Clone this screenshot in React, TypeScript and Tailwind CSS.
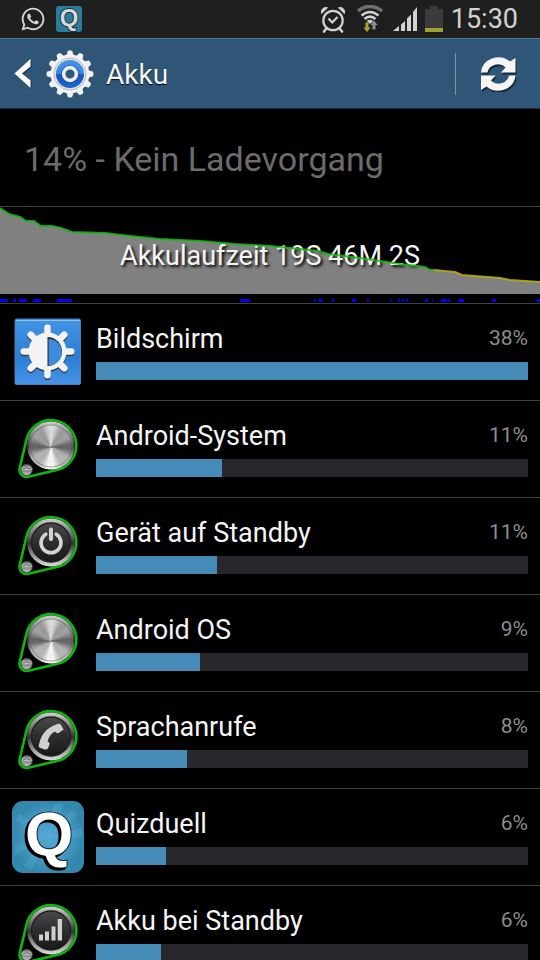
import { FaWhatsapp } from "react-icons/fa";

type IconName = "display" | "metal" | "power" | "phone" | "quiz" | "signal";

type Item = {
  name: string;
  percent: number;
  bar: number;
  icon: IconName;
}

const items: Item[] = [
  { name: "Bildschirm", percent: 38, bar: 100, icon: "display" },
  { name: "Android-System", percent: 11, bar: 29.2, icon: "metal" },
  { name: "Gerät auf Standby", percent: 11, bar: 28, icon: "power" },
  { name: "Android OS", percent: 9, bar: 24, icon: "metal" },
  { name: "Sprachanrufe", percent: 8, bar: 21, icon: "phone" },
  { name: "Quizduell", percent: 6, bar: 16.2, icon: "quiz" },
  { name: "Akku bei Standby", percent: 6, bar: 15, icon: "signal" },
];

// battery level, split where it drops into the yellow range
const greenLine = "0,1 9,7 20,10 26,14 34,14 41,19 52,19 61,21 72,25 105,26 130,29 160,32 200,34 235,37 270,39 290,41 318,44 328,47 360,51 400,57 425,60 430,63 434,63";
const yellowLine = "434,63 455,65 462,68 500,71 510,73 540,75";

// [start, width] of the times the device was awake
const awake = [
  [0, 8], [13, 3], [19, 8], [33, 8], [57, 15], [240, 10], [314, 2], [319, 4], [332, 2],
  [352, 4], [367, 2], [390, 1], [398, 2], [402, 2], [406, 2], [425, 3], [432, 1],
  [441, 6], [448, 2], [458, 6], [492, 4], [537, 3],
];

function Gear() {
  return (
    <svg className="size-12" viewBox="0 0 48 48" aria-hidden="true">
      <defs>
        <linearGradient id="gearBlue" x1="0" y1="0" x2="0" y2="1">
          <stop offset="0" stopColor="#4795ee" />
          <stop offset="0.5" stopColor="#3585e6" />
          <stop offset="0.52" stopColor="#1356bd" />
          <stop offset="1" stopColor="#1c68d2" />
        </linearGradient>
      </defs>
      <g fill="#f2f2f2">
        {[0, 30, 60, 90, 120, 150, 180, 210, 240, 270, 300, 330].map((a) => (
          <path key={a} d="M20 7 L21.6 1.4 Q22 .6 23 .6 H25 Q26 .6 26.4 1.4 L28 7Z" transform={`rotate(${a} 24 24)`} />
        ))}
        <circle cx="24" cy="24" r="19.4" />
      </g>
      <circle cx="24" cy="24" r="16" fill="#e4e4e4" stroke="#b9b9b9" strokeWidth="1" />
      <circle cx="24" cy="24" r="14" fill="url(#gearBlue)" />
      <circle cx="24" cy="24" r="6.4" fill="#3b4f70" stroke="#1a4b99" strokeWidth="5" />
      <circle cx="24" cy="24" r="6.4" fill="#2f5676" stroke="#ececec" strokeWidth="3.6" />
    </svg>
  )
}

function StatusBar() {
  return (
    <div className="flex h-[38px] shrink-0 items-center justify-between bg-[#1f1f1f] pl-5 pr-[22px] text-[#d2d2d2]">
      <div className="flex items-center gap-2.5">
        <FaWhatsapp className="size-[26px]" aria-label="WhatsApp" />
        <svg className="size-[26px] overflow-visible" viewBox="0 0 26 26" aria-hidden="true">
          <rect width="26" height="26" rx="3" fill="#2b7b9c" />
          <text x="13" y="20" textAnchor="middle" fontSize="24" strokeWidth="2" paintOrder="stroke" className="fill-[#d8d8d8] stroke-[#16323f] font-['Liberation_Sans',sans-serif] font-bold">Q</text>
        </svg>
      </div>

      <div className="flex items-center">
        {/* Wecker */}
        <svg className="mr-3 h-7 w-6" viewBox="0 0 24 28" fill="none" stroke="currentColor" aria-hidden="true">
          <circle cx="12" cy="15.5" r="9.7" strokeWidth="2.2" />
          <path d="M7.5 13.5 L11.2 17.5 L16.5 12" strokeWidth="2.2" />
          <path d="M5 24 L3 26.5 M19 24 L21 26.5" strokeWidth="2.6" strokeLinecap="round" />
          <path d="M.6 8.5 A4.5 4.5 0 0 1 6.5 2.8Z M23.4 8.5 A4.5 4.5 0 0 0 17.5 2.8Z" fill="currentColor" strokeWidth="1" />
        </svg>
        {/* WLAN */}
        <svg className="mr-2.5 h-7 w-[26px]" viewBox="0 0 26 28" fill="none" aria-hidden="true">
          <path d="M1 6 Q13 -3 25 6" stroke="#707070" strokeWidth="3.6" />
          <path d="M4.5 10.5 Q13 3.5 21.5 10.5" stroke="#d2d2d2" strokeWidth="2.6" />
          <path d="M7.5 14 Q13 9.2 18.5 14" stroke="#d2d2d2" strokeWidth="2.6" />
          <path d="M9.8 16 Q13 13.5 16.2 16 L13 19Z" fill="#d2d2d2" />
          <path d="M8.5 17.5 H11.5 V22.5 H13.6 L10 27 L6.4 22.5 H8.5Z" fill="#a9a72d" />
          <path d="M15.5 24.5 H18.5 V20 H20.6 L17 15.5 L13.4 20 H15.5Z" fill="#8b8f96" />
        </svg>
        <svg className="mr-2 h-6 w-6" viewBox="0 0 24 24" fill="currentColor" aria-hidden="true">
          <path d="M0 24 L6 19 V24Z M8 17.5 L12 14 V24 H8Z M14 11.5 L18 7.5 V24 H14Z M20 5 L24 0 V24 H20Z" />
        </svg>
        <svg className="mr-2 h-[26px] w-[18px]" viewBox="0 0 18 26" aria-hidden="true">
          <path d="M5 0 H13 V3 H18 V26 H0 V3 H5Z" fill="#3b3b3b" />
          <rect y="22" width="18" height="4" fill="#a3a22f" />
        </svg>
        <span className="text-[27px] leading-8">15:30</span>
      </div>
    </div>
  )
}

// brushed steel, drawn as thin slices around the centre
function Steel({ cx, cy, r }: { cx: number; cy: number; r: number }) {
  const slices = Array.from({ length: 90 }, (_, i) => i * 4);
  return (
    <g>
      {slices.map((deg) => {
        const a = (deg * Math.PI) / 180;
        const b = ((deg + 4) * Math.PI) / 180;
        const light = Math.min(250, Math.round(172 - 48 * Math.cos(2 * a) - 22 * Math.cos(6 * a) + 16 * Math.sin(a)));
        const color = `rgb(${light},${light},${light})`;
        return (
          <path
            key={deg}
            d={`M${cx} ${cy} L${cx + r * Math.cos(a)} ${cy + r * Math.sin(a)} L${cx + r * Math.cos(b)} ${cy + r * Math.sin(b)}Z`}
            fill={color}
            stroke={color}
            strokeWidth="0.4"
          />
        )
      })}
    </g>
  )
}

function Knob({ icon }: { icon: IconName }) {
  return (
    <svg className="size-[72px]" viewBox="0 0 72 72" aria-hidden="true">
      <defs>
        <linearGradient id="ring" x1="0" y1="0" x2="0" y2="1">
          <stop offset="0" stopColor="#d0d0d0" />
          <stop offset="0.3" stopColor="#777" />
          <stop offset="0.52" stopColor="#333" />
          <stop offset="0.75" stopColor="#929292" />
          <stop offset="1" stopColor="#dcdcdc" />
        </linearGradient>
        <linearGradient id="dark" x1="0" y1="0" x2="0" y2="1">
          <stop offset="0" stopColor="#4a4a4a" />
          <stop offset="0.5" stopColor="#2d2d2d" />
          <stop offset="1" stopColor="#181818" />
        </linearGradient>
        <linearGradient id="ball" x1="0" y1="0" x2="0" y2="1">
          <stop offset="0" stopColor="#4d4d4d" />
          <stop offset="0.4" stopColor="#d8d8d8" />
          <stop offset="0.6" stopColor="#858585" />
          <stop offset="1" stopColor="#d0d0d0" />
        </linearGradient>
      </defs>
      <path d="M14.4 26.7 A25.3 25.3 0 1 1 44.8 57.1 L16.4 63.8 A7.2 7.2 0 0 1 7.7 55.1Z" fill="#000" stroke="#0cb80c" strokeWidth="2.6" />
      <circle cx="39" cy="32.5" r="24" fill="url(#ring)" />
      {icon === "metal" ? (
        <>
          <Steel cx={39} cy={34} r={22} />
          <circle cx="39" cy="33" r="21" fill="none" stroke="#4c4c4c" strokeOpacity=".5" />
        </>
      ) : (
        <circle cx="39" cy="32.5" r="19.5" fill="url(#dark)" stroke="#202020" strokeWidth="1.4" />
      )}
      <circle cx="14.7" cy="56.8" r="5.6" fill="url(#ball)" stroke="#555" strokeWidth=".8" />
      <path d="M10.5 56 Q14.5 53.5 19 56" fill="none" stroke="#444" strokeWidth=".8" />
      {icon === "power" && (
        <g fill="none" stroke="#d4d4d4" strokeWidth="3.6" strokeLinecap="round">
          <path d="M33.8 24.2 A10 10 0 1 0 44.2 24.2" />
          <path d="M39 19.5 V29" strokeWidth="4" />
        </g>
      )}
      {icon === "phone" && (
        <path d="M44 20.5 L46.5 19.8 Q48 19.6 49 21 L51.6 25.4 L46.6 29 Q44.5 29.8 43 27.6 Q37.5 30 35.6 37.5 Q38 38 37.6 40 L36 44.5 Q34.5 46 32.5 45.4 L28 43.8 Q26 43 27 40.5 Q30 25.5 44 20.5Z" fill="#d0d0d0" />
      )}
      {icon === "signal" && (
        <path d="M27 36.5 H31 V42.6 H27Z M33 33.5 H37 V42.6 H33Z M39.5 28.5 H43.5 V42.6 H39.5Z M45.7 21 H50 V42.6 H45.7Z" fill="#d0d0d0" />
      )}
    </svg>
  )
}

function Sun() {
  return (
    <>
      <circle cx="35.5" cy="35.5" r="19" />
      {[0, 45, 90, 135, 180, 225, 270, 315].map((a) => (
        <rect key={a} x="32.2" y="8.5" width="6.6" height="14" rx="3.2" transform={`rotate(${a} 35.5 35.5)`} />
      ))}
    </>
  )
}

function DisplayIcon() {
  return (
    <svg className="size-[72px]" viewBox="0 0 72 72" aria-hidden="true">
      <defs>
        <linearGradient id="displayBlue" x1="0" y1="0" x2="0" y2="1">
          <stop offset="0" stopColor="#4393e6" />
          <stop offset="0.6" stopColor="#2b7fd4" />
          <stop offset="1" stopColor="#4792e8" />
        </linearGradient>
      </defs>
      <rect x="3" y="3" width="65.5" height="65.5" rx="1.5" fill="url(#displayBlue)" stroke="#4584bb" />
      <path d="M4 4.5 H68" stroke="#8fc6f5" strokeWidth="1.2" />
      <g fill="#333f4c" transform="translate(0 1.5)"><Sun /></g>
      <g fill="#f3f3f3"><Sun /></g>
      <path d="M35.5 21 A14.5 14.5 0 0 1 35.5 50Z" fill="#25303c" />
      <path d="M36.6 23 A13 13 0 0 1 36.6 49.5Z" fill="#3c8cdc" />
    </svg>
  )
}

function QuizIcon() {
  return (
    <svg className="size-[72px] overflow-visible" viewBox="0 0 72 72" aria-hidden="true">
      <defs>
        <radialGradient id="quizBlue">
          <stop offset="0" stopColor="#53a8d2" />
          <stop offset="0.6" stopColor="#439ac2" />
          <stop offset="1" stopColor="#3488ae" />
        </radialGradient>
      </defs>
      <rect width="72" height="72" rx="11" fill="url(#quizBlue)" />
      <path d="M36 36 L42 3 L52 3Z M36 36 L60 8 L66 14Z M36 36 L70 27 V36Z M36 36 L3 20 L7 12Z M36 36 L3 44 V54Z M36 36 L20 69 L11 65Z M36 36 L50 69 H60Z" fill="#63b2d6" fillOpacity=".25" />
      <text x="37" y="54" textAnchor="middle" fontSize="62" strokeWidth="2" paintOrder="stroke" className="fill-white stroke-[#10242e] font-['Liberation_Sans',sans-serif] font-bold text-shadow-[-2px_2px_0_#000]">Q</text>
    </svg>
  )
}

function ItemIcon({ icon }: { icon: IconName }) {
  if (icon === "display") return <DisplayIcon />;
  if (icon === "quiz") return <QuizIcon />;
  return <Knob icon={icon} />;
}

export default function App() {
  return (
    <div className="flex h-screen flex-col overflow-hidden bg-black font-['Roboto',sans-serif] text-[#f5f5f5]">
      <StatusBar />

      {/* header */}
      <header className="flex h-[71px] shrink-0 items-center justify-between border-t border-b border-t-[#527795] border-b-[#16293a] bg-[#2f5676] pl-3 pr-[22px]">
        <div className="flex items-center">
          <button type="button" aria-label="Zurück" className="flex items-center">
            <svg className="h-8 w-[34px]" viewBox="0 0 34 32" aria-hidden="true">
              <path d="M19.5 3 V9.5 L11.5 16.5 L19.5 23.5 V31 L4 17Z" fill="#1c3448" />
              <path d="M18.5 1 V8.5 L10 15.5 L18.5 22.5 V30 L2.5 15.5Z" fill="#fff" />
            </svg>
            <Gear />
          </button>
          <h1 className="ml-3 pt-0.5 text-[28px] leading-8 text-shadow-[0_1px_1px_#000]">Akku</h1>
        </div>
        <div className="flex items-center gap-6">
          <div className="h-[42px] w-px bg-[#7c92a3]" />
          <button type="button" aria-label="Aktualisieren">
            <svg className="h-9 w-[38px]" viewBox="0 0 38 36" aria-hidden="true">
              {["#16293a", "#f5f5f5"].map((color, i) => (
                <g key={color} fill={color} transform={i === 0 ? "translate(1 2)" : undefined}>
                  <path d="M1 16.5 A17.5 16.5 0 0 1 30 5.5 L35.5 2 V16.5 H21 L25.5 11.5 A10.5 10 0 0 0 7.5 16.5Z" />
                  <path d="M1 16.5 A17.5 16.5 0 0 1 30 5.5 L35.5 2 V16.5 H21 L25.5 11.5 A10.5 10 0 0 0 7.5 16.5Z" transform="rotate(180 18.25 18)" />
                </g>
              ))}
            </svg>
          </button>
        </div>
      </header>

      <main className="min-h-0 flex-1 overflow-y-auto [scrollbar-width:none]">
        <p className="flex h-[98px] items-center border-b border-[#3f3f3f] px-6 pt-0.5 text-[34px] leading-10 text-[#6b6b6b]">
          14% - Kein Ladevorgang
        </p>

        {/* Verlauf */}
        <div className="relative h-[97px] border-b border-[#3f3f3f]">
          <svg className="h-24 w-full" viewBox="0 0 540 96" preserveAspectRatio="none" aria-hidden="true">
            <polygon points={`${greenLine} ${yellowLine} 540,87 0,87`} fill="#808080" />
            {awake.map(([x, w]) => (
              <rect key={x} x={x} y="92" width={w} height="3" fill="#0000ff" />
            ))}
          </svg>
          <p className="absolute inset-x-0 top-[33px] text-center text-[27px] leading-8 text-shadow-[2px_2px_3px_#000]">
            Akkulaufzeit 19S 46M 2S
          </p>
          <svg className="absolute inset-x-0 top-0 h-24 w-full" viewBox="0 0 540 96" preserveAspectRatio="none" fill="none" strokeWidth="2" aria-hidden="true">
            <polyline points={greenLine} stroke="#10c010" strokeOpacity=".85" />
            <polyline points={yellowLine} stroke="#b5ad12" strokeOpacity=".9" />
          </svg>
        </div>

        <ul>
          {items.map((item) => (
            <li key={item.name} className="flex h-[97px] items-start gap-3 border-b border-[#3f3f3f] p-3">
              <ItemIcon icon={item.icon} />
              <div className="flex-1 pt-1.5">
                <div className="flex items-start justify-between">
                  <h2 className="text-[27px] leading-[34px]">{item.name}</h2>
                  <span className="text-[21px] leading-8 text-[#8c8c8c]">{item.percent}%</span>
                </div>
                <div className="mt-1.5 h-[18px] bg-[#29262c]">
                  <div className="h-full bg-[#468ab8]" style={{ width: `${item.bar}%` }} />
                </div>
              </div>
            </li>
          ))}
        </ul>
      </main>
    </div>
  )
}
